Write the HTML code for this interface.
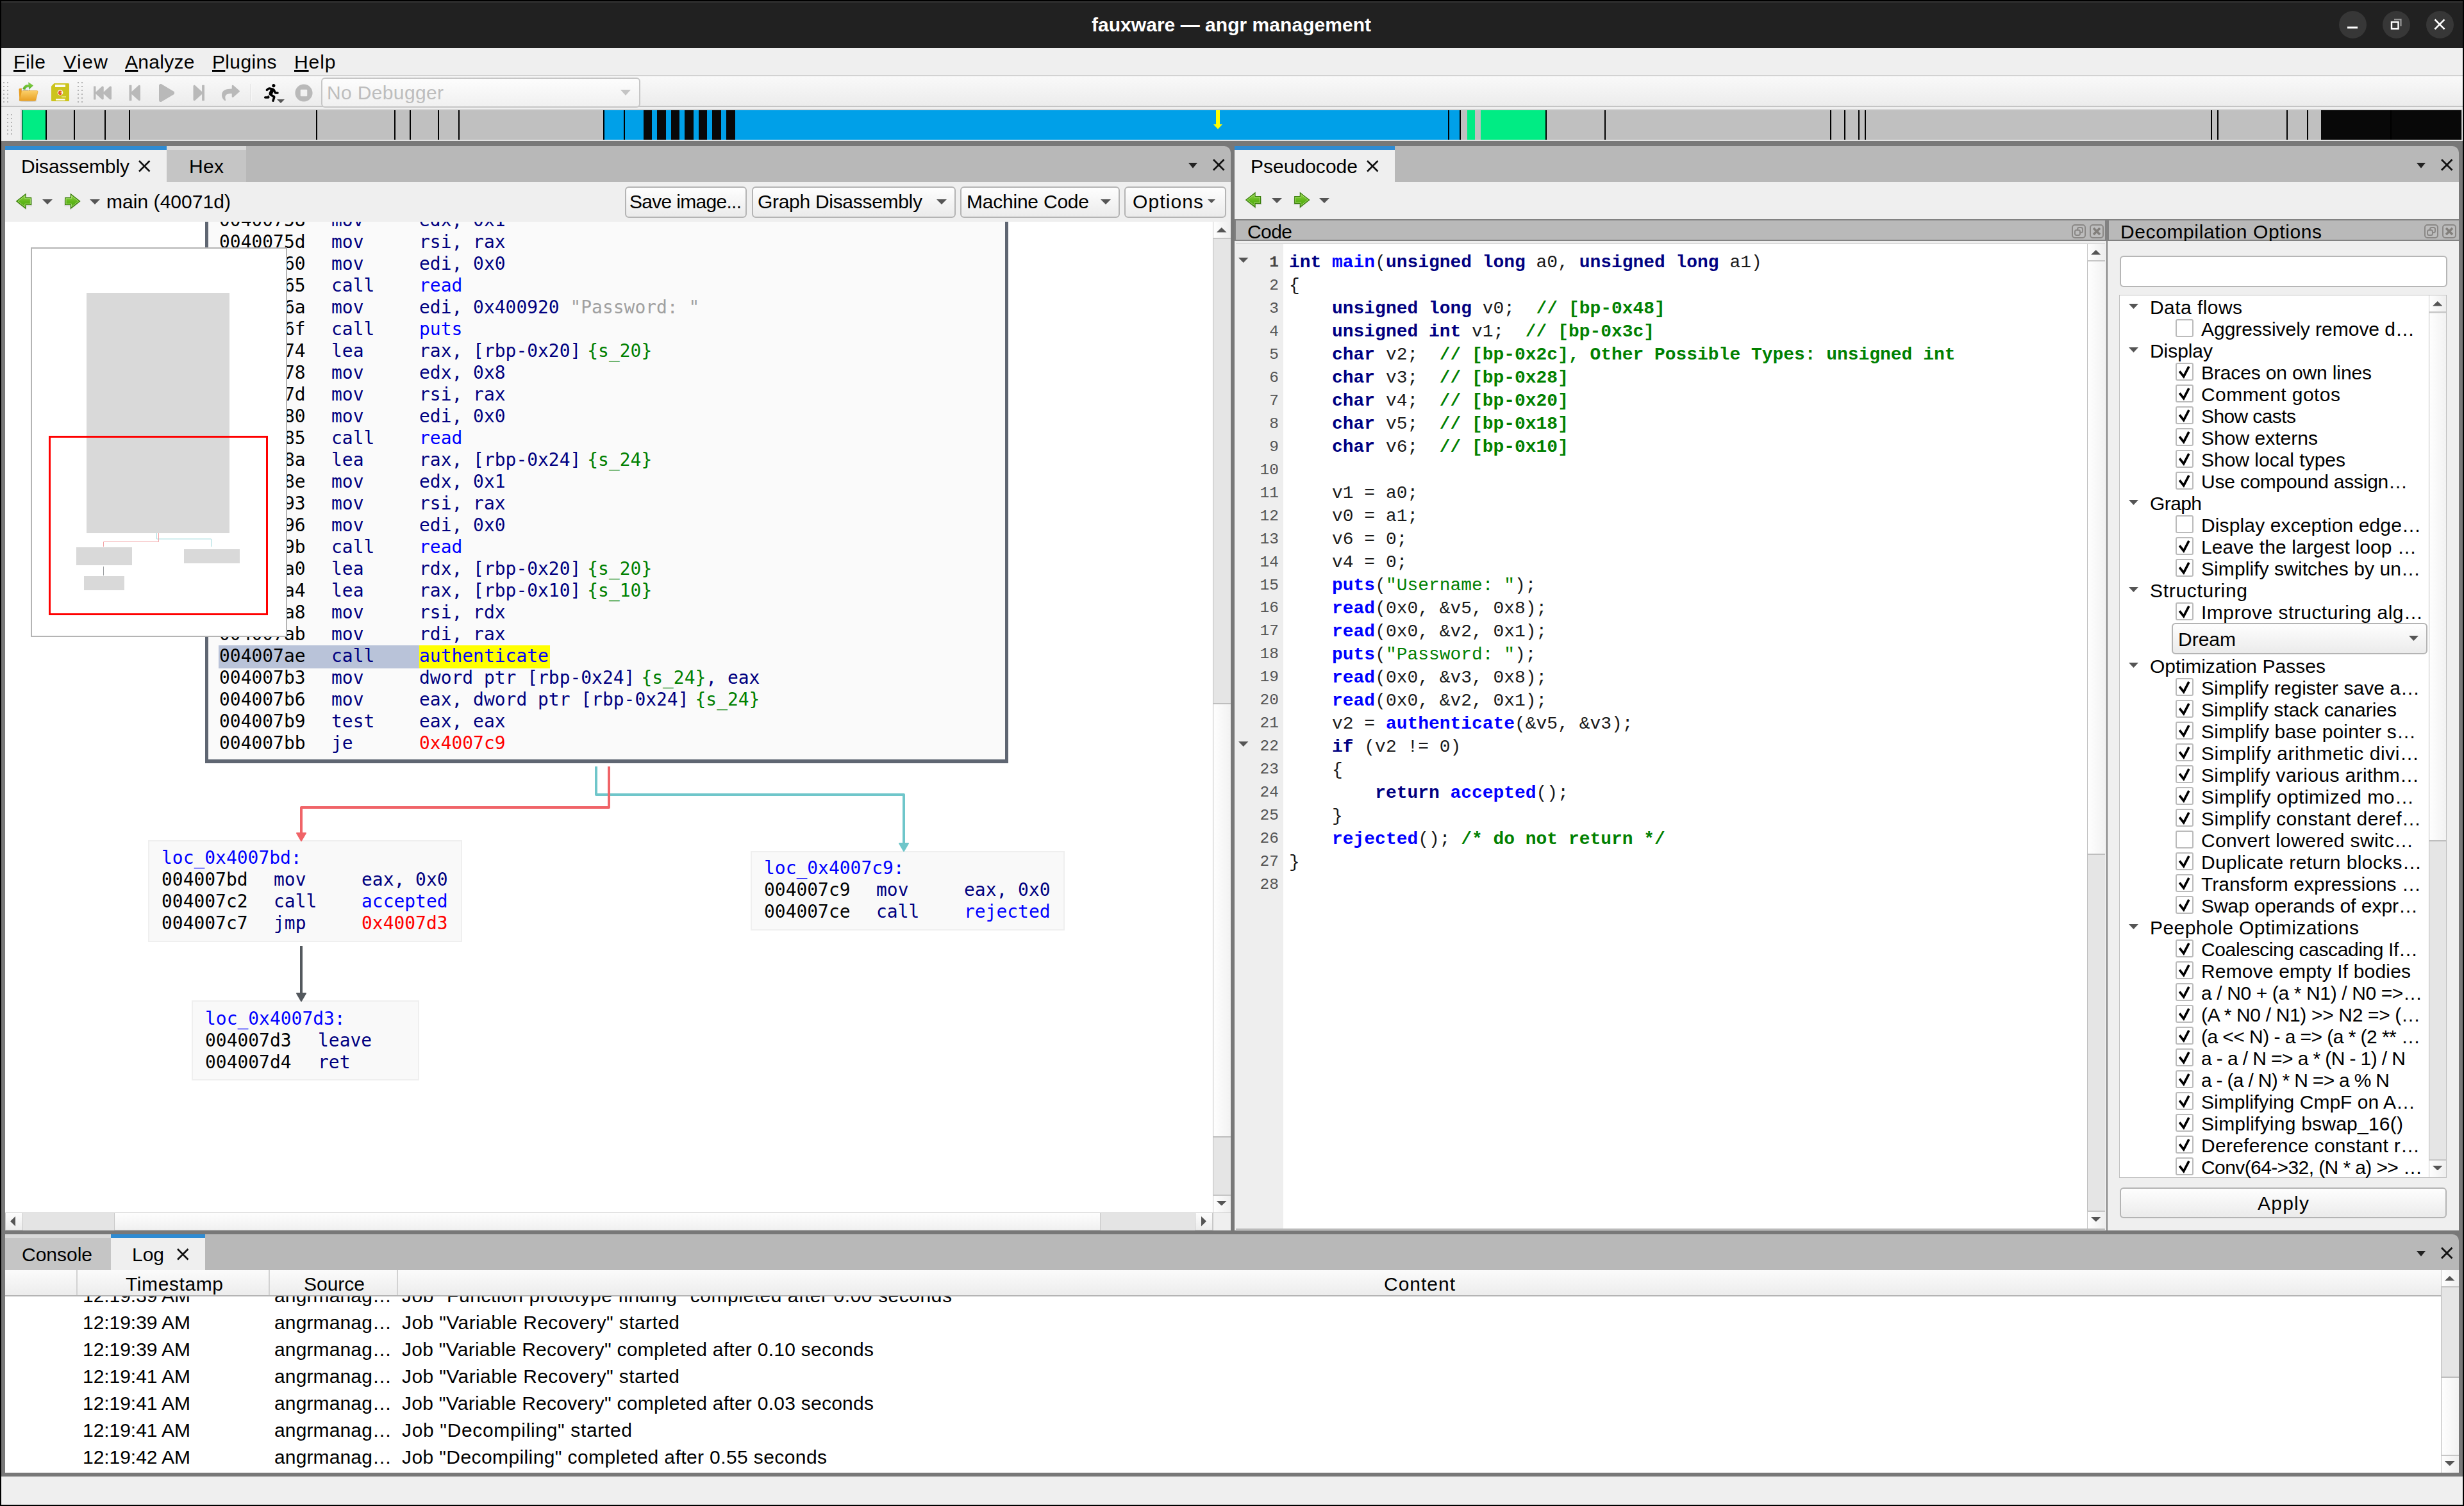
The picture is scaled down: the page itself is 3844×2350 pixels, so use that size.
<!DOCTYPE html>
<html><head><meta charset="utf-8"><title>fauxware — angr management</title>
<style>
html,body{margin:0;padding:0}
body{width:3844px;height:2350px;overflow:hidden;background:#000;position:relative}
#w div,#w svg{position:absolute;box-sizing:border-box}
#w{position:absolute;left:0;top:0;width:3844px;height:2350px;overflow:hidden}
.u,.ub,.m,.c,.cb{white-space:pre;line-height:1;color:#000}
.u{font-family:"Liberation Sans",sans-serif;font-size:30px}
.ub{font-family:"Liberation Sans",sans-serif;font-size:30px;font-weight:bold}
.m{font-family:"DejaVu Sans Mono","Liberation Mono",monospace;font-size:27.95px}
.c{font-family:"Liberation Mono",monospace;font-size:27.95px}
.cb{font-family:"Liberation Mono",monospace;font-size:27.95px;font-weight:bold}
b{font-weight:bold}
.btn{border:2px solid #b4b4b4;border-radius:6px;background:linear-gradient(#fefefe,#ebebeb)}
.k{color:#000080;font-weight:bold}.f{color:#0000ff;font-weight:bold}.g{color:#008000;font-weight:bold}.s{color:#008000}
.n{color:#000080}.fn{color:#0000ff}.v{color:#008000}.j{color:#ff0000}.st{color:#a0a0a0}
</style></head>
<body><div id="w">
<div style="left:2px;top:2px;width:3840px;height:73px;background:#212121;"></div>
<div style="left:2px;top:2px;width:3840px;height:2px;background:#343434;"></div>
<div class="ub" style="left:1703px;top:23.60px;font-size:30px;letter-spacing:0.034px;color:#fff;">fauxware — angr management</div>
<div style="left:3648.5px;top:16.5px;width:43px;height:43px;background:#373737;border-radius:50%;"></div>
<div style="left:3716.5px;top:16.5px;width:43px;height:43px;background:#373737;border-radius:50%;"></div>
<div style="left:3784.5px;top:16.5px;width:43px;height:43px;background:#373737;border-radius:50%;"></div>
<svg style="left:3658px;top:26px" width="24" height="24" viewBox="0 0 24 24"><rect x="4" y="15.5" width="16" height="3" fill="#fff"/></svg>
<svg style="left:3726px;top:26px" width="24" height="24" viewBox="0 0 24 24"><path d="M9 4.5H19.5V15" fill="none" stroke="#9a9a9a" stroke-width="2.2"/><rect x="5" y="8.5" width="10.5" height="10.5" fill="none" stroke="#fff" stroke-width="2.4"/></svg>
<svg style="left:3794px;top:26px" width="24" height="24" viewBox="0 0 24 24"><path d="M4.5 4.5L19.5 19.5M19.5 4.5L4.5 19.5" stroke="#fff" stroke-width="2.6" fill="none"/></svg>
<div style="left:2px;top:75px;width:3840px;height:42px;background:#efefef;"></div>
<div class="u" style="left:21px;top:81.60px;letter-spacing:0.552px;"><u>F</u>ile</div>
<div class="u" style="left:99px;top:81.60px;letter-spacing:1.505px;"><u>V</u>iew</div>
<div class="u" style="left:195px;top:81.60px;letter-spacing:0.294px;"><u>A</u>nalyze</div>
<div class="u" style="left:331px;top:81.60px;letter-spacing:0.349px;"><u>P</u>lugins</div>
<div class="u" style="left:459px;top:81.60px;letter-spacing:0.927px;"><u>H</u>elp</div>
<div style="left:2px;top:117px;width:3840px;height:2px;background:#d2d2d2;"></div>
<div style="left:2px;top:119px;width:3840px;height:46px;background:linear-gradient(#f9f9f9,#ececec);"></div>
<div style="left:2px;top:165px;width:3840px;height:2px;background:#c4c4c4;"></div>
<div style="left:2px;top:167px;width:3840px;height:53px;background:#efefef;"></div>
<svg style="left:4.5px;top:127.5px" width="8" height="32" viewBox="0 0 8 32"><rect x="0" y="0" width="2" height="2" fill="#b4b4b4"/><rect x="6" y="0" width="2" height="2" fill="#b4b4b4"/><rect x="0" y="6" width="2" height="2" fill="#b4b4b4"/><rect x="6" y="6" width="2" height="2" fill="#b4b4b4"/><rect x="0" y="12" width="2" height="2" fill="#b4b4b4"/><rect x="6" y="12" width="2" height="2" fill="#b4b4b4"/><rect x="0" y="18" width="2" height="2" fill="#b4b4b4"/><rect x="6" y="18" width="2" height="2" fill="#b4b4b4"/><rect x="0" y="24" width="2" height="2" fill="#b4b4b4"/><rect x="6" y="24" width="2" height="2" fill="#b4b4b4"/><rect x="0" y="30" width="2" height="2" fill="#b4b4b4"/><rect x="6" y="30" width="2" height="2" fill="#b4b4b4"/></svg>
<svg style="left:120.5px;top:127.5px" width="8" height="32" viewBox="0 0 8 32"><rect x="0" y="0" width="2" height="2" fill="#b4b4b4"/><rect x="6" y="0" width="2" height="2" fill="#b4b4b4"/><rect x="0" y="6" width="2" height="2" fill="#b4b4b4"/><rect x="6" y="6" width="2" height="2" fill="#b4b4b4"/><rect x="0" y="12" width="2" height="2" fill="#b4b4b4"/><rect x="6" y="12" width="2" height="2" fill="#b4b4b4"/><rect x="0" y="18" width="2" height="2" fill="#b4b4b4"/><rect x="6" y="18" width="2" height="2" fill="#b4b4b4"/><rect x="0" y="24" width="2" height="2" fill="#b4b4b4"/><rect x="6" y="24" width="2" height="2" fill="#b4b4b4"/><rect x="0" y="30" width="2" height="2" fill="#b4b4b4"/><rect x="6" y="30" width="2" height="2" fill="#b4b4b4"/></svg>
<svg style="left:10.5px;top:178px" width="8" height="32" viewBox="0 0 8 32"><rect x="0" y="0" width="2" height="2" fill="#b4b4b4"/><rect x="6" y="0" width="2" height="2" fill="#b4b4b4"/><rect x="0" y="6" width="2" height="2" fill="#b4b4b4"/><rect x="6" y="6" width="2" height="2" fill="#b4b4b4"/><rect x="0" y="12" width="2" height="2" fill="#b4b4b4"/><rect x="6" y="12" width="2" height="2" fill="#b4b4b4"/><rect x="0" y="18" width="2" height="2" fill="#b4b4b4"/><rect x="6" y="18" width="2" height="2" fill="#b4b4b4"/><rect x="0" y="24" width="2" height="2" fill="#b4b4b4"/><rect x="6" y="24" width="2" height="2" fill="#b4b4b4"/><rect x="0" y="30" width="2" height="2" fill="#b4b4b4"/><rect x="6" y="30" width="2" height="2" fill="#b4b4b4"/></svg>
<svg style="left:146.00px;top:130.5px" width="28.00" height="28" viewBox="0 0 512 512"><path d="M0 436V76c0-6.6 5.4-12 12-12h40c6.6 0 12 5.4 12 12v151.9L235.5 71.4C256.1 54.3 288 68.6 288 96v131.9L459.5 71.4C480.1 54.3 512 68.6 512 96v320c0 27.4-31.9 41.7-52.5 24.6L288 285.3V416c0 27.4-31.9 41.7-52.5 24.6L64 285.3V436c0 6.6-5.4 12-12 12H12c-6.6 0-12-5.4-12-12z" fill="#b9b9b9"/></svg>
<svg style="left:197.75px;top:130.5px" width="24.50" height="28" viewBox="0 0 448 512"><path d="M64 468V44c0-6.6 5.4-12 12-12h48c6.6 0 12 5.4 12 12v176.4l195.5-181C352.1 22.3 384 36.6 384 64v384c0 27.4-31.9 41.7-52.5 24.6L136 292.7V468c0 6.6-5.4 12-12 12H76c-6.6 0-12-5.4-12-12z" fill="#b9b9b9"/></svg>
<svg style="left:247.75px;top:130.5px" width="24.50" height="28" viewBox="0 0 448 512"><path d="M424.4 214.7L72.4 6.6C43.8-10.3 0 6.1 0 47.9V464c0 37.5 40.7 60.1 72.4 41.3l352-208c31.4-18.5 31.5-64.1 0-82.600z" fill="#b9b9b9"/></svg>
<svg style="left:297.75px;top:130.5px" width="24.50" height="28" viewBox="0 0 448 512"><path d="M384 44v424c0 6.6-5.4 12-12 12h-48c-6.6 0-12-5.4-12-12V291.6l-195.5 181C95.9 489.7 64 475.4 64 448V64c0-27.4 31.9-41.7 52.5-24.6L312 219.3V44c0-6.6 5.4-12 12-12h48c6.600 0 12 5.4 12 12z" fill="#b9b9b9"/></svg>
<svg style="left:346.00px;top:130.5px" width="28.00" height="28" viewBox="0 0 512 512"><path d="M503.691 189.836L327.687 37.851C312.281 24.546 288 35.347 288 56.015v80.053C127.371 137.907 0 170.1 0 322.326c0 61.441 39.581 122.309 83.333 154.132 13.653 9.931 33.111-2.533 28.077-18.631C66.066 312.814 132.917 274.316 288 272.085V360c0 20.7 24.3 31.453 39.687 18.164l176.004-152c11.071-9.562 11.086-26.753 0-36.328z" fill="#b9b9b9"/></svg>
<svg style="left:460.00px;top:130.5px" width="28.00" height="28" viewBox="0 0 512 512"><path d="M256 8C119 8 8 119 8 256s111 248 248 248 248-111 248-248S393 8 256 8zm96 328c0 8.8-7.2 16-16 16H176c-8.8 0-16-7.2-16-16V176c0-8.800 7.2-16 16-16h160c8.8 0 16 7.2 16 16v160z" fill="#b9b9b9"/></svg>
<div style="left:391px;top:131px;width:1px;height:27px;background:#cfcfcf;"></div>
<div style="left:392px;top:131px;width:1px;height:27px;background:#fdfdfd;"></div>
<svg style="left:412.4px;top:130.5px" width="22.75" height="28" viewBox="0 0 416 512"><path d="M272 96c26.51 0 48-21.49 48-48S298.51 0 272 0s-48 21.49-48 48 21.49 48 48 48zM113.69 317.47l-14.8 34.52H32c-17.67 0-32 14.33-32 32s14.33 32 32 32h77.45c19.25 0 36.58-11.44 44.11-29.090l8.790-20.520-10.670-6.300c-17.320-10.230-30.060-25.370-37.990-42.610zM384 223.990h-44.030l-26.060-53.250c-12.500-25.550-35.450-44.230-61.780-50.940l-71.080-21.140c-28.300-6.800-57.770-.55-80.840 17.140l-39.670 30.410c-14.030 10.750-16.690 30.830-5.920 44.860s30.840 16.660 44.860 5.920l39.690-30.410c7.670-5.890 17.440-8 25.270-6.140l14.700 4.370-37.460 87.390c-12.620 29.480-1.310 64.010 26.300 80.310l84.980 50.170-27.470 87.730c-5.280 16.860 4.110 34.810 20.970 40.090 3.190 1 6.410 1.480 9.580 1.480 13.610 0 26.230-8.770 30.520-22.450l31.640-101.060c5.910-20.770-2.890-43.080-21.640-54.390l-61.240-36.140 31.310-78.280 20.270 41.430c8 16.340 24.920 26.890 43.110 26.890H384c17.670 0 32-14.330 32-32s-14.330-32-32-32z" fill="#000"/></svg>
<svg style="left:432px;top:155px" width="12" height="6" viewBox="0 0 12 6"><path d="M0 0H12L6 6Z" fill="#555"/></svg>
<svg style="left:27px;top:126px" width="34" height="34" viewBox="0 0 34 34"><defs><linearGradient id="fg" x1="0" y1="0" x2="0" y2="1"><stop offset="0" stop-color="#fbd06a"/><stop offset="1" stop-color="#e9a023"/></linearGradient><linearGradient id="ga" x1="0" y1="0" x2="0" y2="1"><stop offset="0" stop-color="#8fdc4a"/><stop offset="1" stop-color="#55b020"/></linearGradient></defs><ellipse cx="17" cy="31.500" rx="14" ry="1.600" fill="#000" opacity="0.120"/><path d="M2.500 13.500Q2.500 12 4 12H9L11 14H20V31H3.500Z" fill="#e89c1c"/><path d="M7 12.500L16 10L19 11.500V18H7Z" fill="#eef3f8" stroke="#b8c6d4" stroke-width="0.600"/><path d="M9 14.500H17M9 16.500H15" stroke="#8aa4c0" stroke-width="0.800"/><path d="M6.500 17Q7 15.500 8.500 15.500H30.500Q32.500 15.500 32 17.500L29 30Q28.700 31.300 27 31.300H4.500Q3 31.300 3.400 29.800Z" fill="url(#fg)" stroke="#e0961a" stroke-width="0.500"/><path d="M9 13C9.500 8 14 5.500 18 6.800L17.600 2.800L24.500 7.600L18.600 13L18.400 9.800C15.500 9 13 10.500 12.300 13.500Z" fill="url(#ga)" stroke="#4c9c1c" stroke-width="0.500" stroke-linejoin="round"/></svg>
<svg style="left:80px;top:130px" width="28" height="28" viewBox="0 0 28 28"><path d="M0 4.500L4.500 0H26.500Q28 0 28 1.500V26.500Q28 28 26.500 28H1.500Q0 28 0 26.500Z" fill="#ccc41c"/><rect x="6" y="2" width="16" height="4" fill="#fbfbf0"/><circle cx="14" cy="14.500" r="4.300" fill="#fdf6ee"/><path d="M11 14.500A3 3 0 0 1 16.500 12.800L14 14.500L16.800 16A3 3 0 0 1 11 14.500Z" fill="#e8502a"/><circle cx="15" cy="14.200" r="1" fill="#f0a020"/><rect x="16" y="20.500" width="7" height="1.200" fill="#f4f0b8"/><rect x="7" y="24" width="14.500" height="2.600" fill="#fbfbf0"/></svg>
<div class="btn" style="left:501px;top:121px;width:498px;height:47px;border-color:#c6c6c6;background:linear-gradient(#fdfdfd,#f0f0f0)"></div>
<div class="u" style="left:510px;top:129.60px;letter-spacing:0.355px;color:#bdbdbd;">No Debugger</div>
<svg style="left:967px;top:139px" width="18" height="12" viewBox="0 0 18 12"><path d="M1 1H17L9 10Z" fill="#c4c4c4"/></svg>
<div style="left:32px;top:170px;width:3809px;height:49px;background:#c0c0c0;border:2px solid #d6d6d6;border-right:none;border-bottom:none"></div>
<div style="left:34px;top:172px;width:1px;height:46px;background:#000;"></div>
<div style="left:32px;top:218px;width:3809px;height:2px;background:#e2e2e2;"></div>
<div style="left:35px;top:172px;width:36px;height:46px;background:#00ec84;"></div>
<div style="left:941px;top:172px;width:1338px;height:46px;background:#00a0e8;"></div>
<div style="left:2289px;top:172px;width:12px;height:46px;background:#00ec84;"></div>
<div style="left:2310px;top:172px;width:102px;height:46px;background:#00ec84;"></div>
<div style="left:3621px;top:172px;width:219px;height:46px;background:#080808;"></div>
<div style="left:71px;top:172px;width:2px;height:46px;background:#000;"></div>
<div style="left:115px;top:172px;width:2px;height:46px;background:#000;"></div>
<div style="left:163px;top:172px;width:2px;height:46px;background:#000;"></div>
<div style="left:201px;top:172px;width:2px;height:46px;background:#000;"></div>
<div style="left:493px;top:172px;width:2px;height:46px;background:#000;"></div>
<div style="left:615px;top:172px;width:2px;height:46px;background:#000;"></div>
<div style="left:639px;top:172px;width:2px;height:46px;background:#000;"></div>
<div style="left:683px;top:172px;width:2px;height:46px;background:#000;"></div>
<div style="left:715px;top:172px;width:2px;height:46px;background:#000;"></div>
<div style="left:941px;top:172px;width:2px;height:46px;background:#000;"></div>
<div style="left:973px;top:172px;width:2px;height:46px;background:#000;"></div>
<div style="left:2259px;top:172px;width:2px;height:46px;background:#000;"></div>
<div style="left:2277px;top:172px;width:2px;height:46px;background:#000;"></div>
<div style="left:2411px;top:172px;width:2px;height:46px;background:#000;"></div>
<div style="left:2503px;top:172px;width:2px;height:46px;background:#000;"></div>
<div style="left:2855px;top:172px;width:2px;height:46px;background:#000;"></div>
<div style="left:2877px;top:172px;width:2px;height:46px;background:#000;"></div>
<div style="left:2899px;top:172px;width:2px;height:46px;background:#000;"></div>
<div style="left:2909px;top:172px;width:2px;height:46px;background:#000;"></div>
<div style="left:3449px;top:172px;width:2px;height:46px;background:#000;"></div>
<div style="left:3459px;top:172px;width:2px;height:46px;background:#000;"></div>
<div style="left:3567px;top:172px;width:2px;height:46px;background:#000;"></div>
<div style="left:3599px;top:172px;width:2px;height:46px;background:#000;"></div>
<div style="left:1004px;top:172px;width:13px;height:46px;background:#080808;"></div>
<div style="left:1025px;top:172px;width:14px;height:46px;background:#080808;"></div>
<div style="left:1047px;top:172px;width:13px;height:46px;background:#080808;"></div>
<div style="left:1068px;top:172px;width:14px;height:46px;background:#080808;"></div>
<div style="left:1090px;top:172px;width:13px;height:46px;background:#080808;"></div>
<div style="left:1111px;top:172px;width:14px;height:46px;background:#080808;"></div>
<div style="left:1133px;top:172px;width:14px;height:46px;background:#080808;"></div>
<div style="left:3729px;top:172px;width:1.5px;height:46px;background:#000;"></div>
<svg style="left:1890px;top:172px" width="20" height="30" viewBox="0 0 20 30"><path d="M7 0H13V22H17L10 29.500L3 22H7Z" fill="#ffff00"/></svg>
<div style="left:2px;top:220px;width:3840px;height:2084px;background:#787878;"></div>
<div style="left:2px;top:2304px;width:3840px;height:44px;background:#efefef;"></div>
<div style="left:8px;top:228px;width:1912px;height:56px;background:#b8b8b8;border-top-right-radius:10px"></div>
<div style="left:8px;top:228px;width:252px;height:56px;background:#efefef;"></div>
<div style="left:8px;top:228px;width:252px;height:6px;background:#2f8bd2;"></div>
<div style="left:260px;top:228px;width:124px;height:56px;background:#c5c5c5;"></div>
<div style="left:260px;top:228px;width:124px;height:6px;background:#d9d9d9;"></div>
<div class="u" style="left:33px;top:244.60px;letter-spacing:-0.105px;">Disassembly</div>
<svg style="left:214.75px;top:248.75px" width="20.5" height="20.5" viewBox="0 0 20.5 20.5"><path d="M2 2L18.5 18.5M18.5 2L2 18.5" stroke="#111" stroke-width="2.7" fill="none"/></svg>
<div class="u" style="left:295px;top:244.60px;letter-spacing:0.320px;">Hex</div>
<svg style="left:1854.0px;top:254.05px" width="14" height="8.5" viewBox="0 0 14 8.5"><path d="M0 0H14L7.0 8.5Z" fill="#222"/></svg>
<svg style="left:1890.75px;top:246.75px" width="20.5" height="20.5" viewBox="0 0 20.5 20.5"><path d="M2 2L18.5 18.5M18.5 2L2 18.5" stroke="#111" stroke-width="2.7" fill="none"/></svg>
<div style="left:8px;top:284px;width:1912px;height:62px;background:#efefef;"></div>
<svg style="left:23.5px;top:300px" width="27" height="30" viewBox="0 0 27 30"><defs><linearGradient id="na1" x1="0" y1="0" x2="0" y2="1"><stop offset="0" stop-color="#94d548"/><stop offset="0.5" stop-color="#62b81c"/><stop offset="1" stop-color="#4aa40e"/></linearGradient></defs><path d="M2.500 15L16 4V9.500H25V20H16V26Z" fill="#000" opacity="0.100" transform="translate(1,2)"/><path d="M1.800 14L16 2.900V8.600H24.600V19.400H16V25.100Z" fill="url(#na1)" stroke="#3b7f0c" stroke-width="1.300" stroke-linejoin="miter"/><path d="M4 14L14.800 5.500V9.800H23.400V18.200H14.800V22.500Z" fill="none" stroke="#b9e68a" stroke-width="1" opacity="0.750"/></svg>
<svg style="left:66.0px;top:311.0px" width="16" height="8" viewBox="0 0 16 8"><path d="M0 0H16L8.0 8Z" fill="#555"/></svg>
<svg style="left:99.5px;top:300px" width="27" height="30" viewBox="0 0 27 30"><g transform="translate(26.4,0) scale(-1,1)"><defs><linearGradient id="na2" x1="0" y1="0" x2="0" y2="1"><stop offset="0" stop-color="#94d548"/><stop offset="0.5" stop-color="#62b81c"/><stop offset="1" stop-color="#4aa40e"/></linearGradient></defs><path d="M2.500 15L16 4V9.500H25V20H16V26Z" fill="#000" opacity="0.100" transform="translate(1,2)"/><path d="M1.800 14L16 2.900V8.600H24.600V19.400H16V25.100Z" fill="url(#na2)" stroke="#3b7f0c" stroke-width="1.300" stroke-linejoin="miter"/><path d="M4 14L14.800 5.500V9.800H23.400V18.200H14.800V22.500Z" fill="none" stroke="#b9e68a" stroke-width="1" opacity="0.750"/></g></svg>
<svg style="left:140.0px;top:311.0px" width="16" height="8" viewBox="0 0 16 8"><path d="M0 0H16L8.0 8Z" fill="#555"/></svg>
<div class="u" style="left:166px;top:300.10px;letter-spacing:0.046px;">main (40071d)</div>
<div class="btn" style="left:974.5px;top:290.5px;width:190.5px;height:49.0px"></div>
<div class="u" style="left:982px;top:300.10px;letter-spacing:-0.703px;">Save image...</div>
<div class="btn" style="left:1172.5px;top:290.5px;width:318.5px;height:49.0px"></div>
<div class="u" style="left:1182px;top:300.10px;letter-spacing:-0.298px;">Graph Disassembly</div>
<svg style="left:1461.0px;top:311.0px" width="16" height="8" viewBox="0 0 16 8"><path d="M0 0H16L8.0 8Z" fill="#555"/></svg>
<div class="btn" style="left:1498px;top:290.5px;width:249px;height:49.0px"></div>
<div class="u" style="left:1508px;top:300.10px;letter-spacing:-0.223px;">Machine Code</div>
<svg style="left:1716.5px;top:311.0px" width="16" height="8" viewBox="0 0 16 8"><path d="M0 0H16L8.0 8Z" fill="#555"/></svg>
<div class="btn" style="left:1754px;top:290.5px;width:159px;height:49.0px"></div>
<div class="u" style="left:1767px;top:300.10px;letter-spacing:1.102px;">Options</div>
<svg style="left:1884.0px;top:311.0px" width="12" height="6" viewBox="0 0 12 6"><path d="M0 0H12L6.0 6Z" fill="#555"/></svg>
<div id="gv" style="left:8px;top:346px;width:1884px;height:1546px;background:#fff;overflow:hidden">
<div style="left:312px;top:-46px;width:1253px;height:891px;background:#fafafa;border:5px solid #5f6672;border-bottom-width:6px"></div>
<div style="left:333px;top:661px;width:313px;height:36px;background:#b9c3d9;"></div>
<div style="left:646px;top:661px;width:204px;height:36px;background:#ffff00;"></div>
<div class="m" style="left:334px;top:-15.55px;">00400758</div>
<div class="m" style="left:509px;top:-15.55px;color:#000080;">mov</div>
<div class="m" style="left:646px;top:-15.55px;color:#000080;">edx, 0x1</div>
<div class="m" style="left:334px;top:18.45px;">0040075d</div>
<div class="m" style="left:509px;top:18.45px;color:#000080;">mov</div>
<div class="m" style="left:646px;top:18.45px;color:#000080;">rsi, rax</div>
<div class="m" style="left:334px;top:52.45px;">00400760</div>
<div class="m" style="left:509px;top:52.45px;color:#000080;">mov</div>
<div class="m" style="left:646px;top:52.45px;color:#000080;">edi, 0x0</div>
<div class="m" style="left:334px;top:86.45px;">00400765</div>
<div class="m" style="left:509px;top:86.45px;color:#000080;">call</div>
<div class="m" style="left:646px;top:86.45px;color:#000080;"><span class="fn">read</span></div>
<div class="m" style="left:334px;top:120.45px;">0040076a</div>
<div class="m" style="left:509px;top:120.45px;color:#000080;">mov</div>
<div class="m" style="left:646px;top:120.45px;color:#000080;">edi, 0x400920 <span class="st">"Password: "</span></div>
<div class="m" style="left:334px;top:154.45px;">0040076f</div>
<div class="m" style="left:509px;top:154.45px;color:#000080;">call</div>
<div class="m" style="left:646px;top:154.45px;color:#000080;"><span class="fn">puts</span></div>
<div class="m" style="left:334px;top:188.45px;">00400774</div>
<div class="m" style="left:509px;top:188.45px;color:#000080;">lea</div>
<div class="m" style="left:646px;top:188.45px;color:#000080;">rax, [rbp-0x20] <span class="v" style="margin-left:-6.830px">{s_20}</span></div>
<div class="m" style="left:334px;top:222.45px;">00400778</div>
<div class="m" style="left:509px;top:222.45px;color:#000080;">mov</div>
<div class="m" style="left:646px;top:222.45px;color:#000080;">edx, 0x8</div>
<div class="m" style="left:334px;top:256.45px;">0040077d</div>
<div class="m" style="left:509px;top:256.45px;color:#000080;">mov</div>
<div class="m" style="left:646px;top:256.45px;color:#000080;">rsi, rax</div>
<div class="m" style="left:334px;top:290.45px;">00400780</div>
<div class="m" style="left:509px;top:290.45px;color:#000080;">mov</div>
<div class="m" style="left:646px;top:290.45px;color:#000080;">edi, 0x0</div>
<div class="m" style="left:334px;top:324.45px;">00400785</div>
<div class="m" style="left:509px;top:324.45px;color:#000080;">call</div>
<div class="m" style="left:646px;top:324.45px;color:#000080;"><span class="fn">read</span></div>
<div class="m" style="left:334px;top:358.45px;">0040078a</div>
<div class="m" style="left:509px;top:358.45px;color:#000080;">lea</div>
<div class="m" style="left:646px;top:358.45px;color:#000080;">rax, [rbp-0x24] <span class="v" style="margin-left:-6.830px">{s_24}</span></div>
<div class="m" style="left:334px;top:392.45px;">0040078e</div>
<div class="m" style="left:509px;top:392.45px;color:#000080;">mov</div>
<div class="m" style="left:646px;top:392.45px;color:#000080;">edx, 0x1</div>
<div class="m" style="left:334px;top:426.45px;">00400793</div>
<div class="m" style="left:509px;top:426.45px;color:#000080;">mov</div>
<div class="m" style="left:646px;top:426.45px;color:#000080;">rsi, rax</div>
<div class="m" style="left:334px;top:460.45px;">00400796</div>
<div class="m" style="left:509px;top:460.45px;color:#000080;">mov</div>
<div class="m" style="left:646px;top:460.45px;color:#000080;">edi, 0x0</div>
<div class="m" style="left:334px;top:494.45px;">0040079b</div>
<div class="m" style="left:509px;top:494.45px;color:#000080;">call</div>
<div class="m" style="left:646px;top:494.45px;color:#000080;"><span class="fn">read</span></div>
<div class="m" style="left:334px;top:528.45px;">004007a0</div>
<div class="m" style="left:509px;top:528.45px;color:#000080;">lea</div>
<div class="m" style="left:646px;top:528.45px;color:#000080;">rdx, [rbp-0x20] <span class="v" style="margin-left:-6.830px">{s_20}</span></div>
<div class="m" style="left:334px;top:562.45px;">004007a4</div>
<div class="m" style="left:509px;top:562.45px;color:#000080;">lea</div>
<div class="m" style="left:646px;top:562.45px;color:#000080;">rax, [rbp-0x10] <span class="v" style="margin-left:-6.830px">{s_10}</span></div>
<div class="m" style="left:334px;top:596.45px;">004007a8</div>
<div class="m" style="left:509px;top:596.45px;color:#000080;">mov</div>
<div class="m" style="left:646px;top:596.45px;color:#000080;">rsi, rdx</div>
<div class="m" style="left:334px;top:630.45px;">004007ab</div>
<div class="m" style="left:509px;top:630.45px;color:#000080;">mov</div>
<div class="m" style="left:646px;top:630.45px;color:#000080;">rdi, rax</div>
<div class="m" style="left:334px;top:664.45px;">004007ae</div>
<div class="m" style="left:509px;top:664.45px;color:#000080;">call</div>
<div class="m" style="left:646px;top:664.45px;color:#000080;"><span class="fn">authenticate</span></div>
<div class="m" style="left:334px;top:698.45px;">004007b3</div>
<div class="m" style="left:509px;top:698.45px;color:#000080;">mov</div>
<div class="m" style="left:646px;top:698.45px;color:#000080;">dword ptr [rbp-0x24] <span class="v" style="margin-left:-6.830px">{s_24}</span>, eax</div>
<div class="m" style="left:334px;top:732.45px;">004007b6</div>
<div class="m" style="left:509px;top:732.45px;color:#000080;">mov</div>
<div class="m" style="left:646px;top:732.45px;color:#000080;">eax, dword ptr [rbp-0x24] <span class="v" style="margin-left:-6.830px">{s_24}</span></div>
<div class="m" style="left:334px;top:766.45px;">004007b9</div>
<div class="m" style="left:509px;top:766.45px;color:#000080;">test</div>
<div class="m" style="left:646px;top:766.45px;color:#000080;">eax, eax</div>
<div class="m" style="left:334px;top:799.95px;">004007bb</div>
<div class="m" style="left:509px;top:799.95px;color:#000080;">je</div>
<div class="m" style="left:646px;top:799.95px;color:#000080;"><span class="j">0x4007c9</span></div>
<div style="left:223px;top:965px;width:490px;height:159px;background:#f9f9f9;border:2px solid #efefef"></div>
<div class="m" style="left:244px;top:978.65px;color:#0000ff;">loc_0x4007bd:</div>
<div class="m" style="left:244px;top:1012.65px;">004007bd</div>
<div class="m" style="left:419px;top:1012.65px;color:#000080;">mov</div>
<div class="m" style="left:556px;top:1012.65px;color:#000080;">eax, 0x0</div>
<div class="m" style="left:244px;top:1046.65px;">004007c2</div>
<div class="m" style="left:419px;top:1046.65px;color:#000080;">call</div>
<div class="m" style="left:556px;top:1046.65px;color:#000080;"><span class="fn">accepted</span></div>
<div class="m" style="left:244px;top:1080.65px;">004007c7</div>
<div class="m" style="left:419px;top:1080.65px;color:#000080;">jmp</div>
<div class="m" style="left:556px;top:1080.65px;color:#000080;"><span class="j">0x4007d3</span></div>
<div style="left:291px;top:1215px;width:355px;height:125px;background:#f9f9f9;border:2px solid #efefef"></div>
<div class="m" style="left:312px;top:1229.65px;color:#0000ff;">loc_0x4007d3:</div>
<div class="m" style="left:312px;top:1263.65px;">004007d3</div>
<div class="m" style="left:488px;top:1263.65px;color:#000080;">leave</div>
<div class="m" style="left:312px;top:1297.65px;">004007d4</div>
<div class="m" style="left:488px;top:1297.65px;color:#000080;">ret</div>
<div style="left:1163px;top:982px;width:490px;height:124px;background:#f9f9f9;border:2px solid #efefef"></div>
<div class="m" style="left:1184px;top:995.15px;color:#0000ff;">loc_0x4007c9:</div>
<div class="m" style="left:1184px;top:1029.15px;">004007c9</div>
<div class="m" style="left:1359px;top:1029.15px;color:#000080;">mov</div>
<div class="m" style="left:1496px;top:1029.15px;color:#000080;">eax, 0x0</div>
<div class="m" style="left:1184px;top:1063.15px;">004007ce</div>
<div class="m" style="left:1359px;top:1063.15px;color:#000080;">call</div>
<div class="m" style="left:1496px;top:1063.15px;color:#000080;"><span class="fn">rejected</span></div>
<svg style="left:0;top:0" width="1884" height="1546" viewBox="8 346 1884 1546"><path d="M930 1196V1240H1410V1316" fill="none" stroke="#6fc6ca" stroke-width="4" stroke-linejoin="round"/><path d="M1403 1316H1417L1410 1328Z" fill="#6fc6ca" stroke="#6fc6ca" stroke-width="2" stroke-linejoin="round"/><path d="M950 1196V1260H470V1300" fill="none" stroke="#f06468" stroke-width="4" stroke-linejoin="round"/><path d="M463 1300H477L470 1312Z" fill="#f06468" stroke="#f06468" stroke-width="2" stroke-linejoin="round"/><path d="M470 1476V1550" fill="none" stroke="#54595e" stroke-width="4"/><path d="M463 1550H477L470 1562Z" fill="#54595e" stroke="#54595e" stroke-width="2" stroke-linejoin="round"/></svg>
<div style="left:40px;top:40px;width:400px;height:608px;background:#fff;border:2px solid #b4b4b4"></div>
<div style="left:127px;top:111px;width:223px;height:375px;background:#d9d9d9;"></div>
<div style="left:111px;top:508px;width:87px;height:28px;background:#d9d9d9;"></div>
<div style="left:279px;top:511px;width:87px;height:22px;background:#d9d9d9;"></div>
<div style="left:123px;top:553px;width:63px;height:22px;background:#d9d9d9;"></div>
<svg style="left:0;top:0" width="1884" height="1546" viewBox="8 346 1884 1546"><path d="M244.500 832V841H329.500V853" fill="none" stroke="#a6dcdf" stroke-width="1"/><path d="M247.500 832V845.500H161.500V853" fill="none" stroke="#f3a3a5" stroke-width="1"/><path d="M161.500 884V898" fill="none" stroke="#9a9da0" stroke-width="1"/><rect x="77.500" y="681.500" width="339" height="277" fill="none" stroke="#ff0000" stroke-width="3"/></svg>
</div>
<div style="left:1892px;top:346px;width:28px;height:1546px;background:#e5e5e5;border-left:1px solid #bcbcbc"></div>
<div style="left:1892px;top:346px;width:28px;height:27px;background:linear-gradient(90deg,#fefefe,#eeeeee);border-left:1px solid #c8c8c8;border-bottom:2px solid #c6c6c6"></div>
<div style="left:1892px;top:1864px;width:28px;height:28px;background:linear-gradient(90deg,#fefefe,#eeeeee);border-left:1px solid #c8c8c8;border-top:2px solid #c6c6c6"></div>
<svg style="left:1898.25px;top:355.25px" width="15.5" height="7.5" viewBox="0 0 15.5 7.5"><path d="M0 7.5H15.5L7.75 0Z" fill="#555"/></svg>
<svg style="left:1898.25px;top:1873.75px" width="15.5" height="7.5" viewBox="0 0 15.5 7.5"><path d="M0 0H15.5L7.75 7.5Z" fill="#555"/></svg>
<div style="left:1892px;top:1097px;width:28px;height:678px;background:linear-gradient(90deg,#fefefe,#f2f2f2);border-left:1px solid #bcbcbc;border-top:2px solid #bebebe;border-bottom:2px solid #bebebe;"></div>
<div style="left:8px;top:1892px;width:1884px;height:28px;background:#e4e4e4;border-top:1px solid #c8c8c8"></div>
<div style="left:8px;top:1892px;width:28px;height:28px;background:linear-gradient(#fdfdfd,#ececec);border:1px solid #c8c8c8"></div>
<div style="left:1864px;top:1892px;width:28px;height:28px;background:linear-gradient(#fdfdfd,#ececec);border:1px solid #c8c8c8"></div>
<svg style="left:16.0px;top:1898.25px" width="8" height="15.5" viewBox="0 0 8 15.5"><path d="M8 0V15.5L0 7.75Z" fill="#555"/></svg>
<svg style="left:1874.0px;top:1898.25px" width="8" height="15.5" viewBox="0 0 8 15.5"><path d="M0 0V15.5L8 7.75Z" fill="#555"/></svg>
<div style="left:178px;top:1892px;width:1539px;height:28px;background:linear-gradient(#fdfdfd,#f0f0f0);border:1px solid #c8c8c8"></div>
<div style="left:1892px;top:1892px;width:28px;height:28px;background:#efefef;border-left:1px solid #c8c8c8;border-top:1px solid #c8c8c8"></div>
<div style="left:1926px;top:228px;width:1910px;height:56px;background:#b8b8b8;border-top-right-radius:10px"></div>
<div style="left:1926px;top:228px;width:250px;height:56px;background:#efefef;"></div>
<div style="left:1926px;top:228px;width:250px;height:6px;background:#2f8bd2;"></div>
<div class="u" style="left:1951px;top:244.60px;letter-spacing:0.021px;">Pseudocode</div>
<svg style="left:2130.75px;top:248.75px" width="20.5" height="20.5" viewBox="0 0 20.5 20.5"><path d="M2 2L18.5 18.5M18.5 2L2 18.5" stroke="#111" stroke-width="2.7" fill="none"/></svg>
<svg style="left:3770.0px;top:254.05px" width="14" height="8.5" viewBox="0 0 14 8.5"><path d="M0 0H14L7.0 8.5Z" fill="#222"/></svg>
<svg style="left:3806.75px;top:246.75px" width="20.5" height="20.5" viewBox="0 0 20.5 20.5"><path d="M2 2L18.5 18.5M18.5 2L2 18.5" stroke="#111" stroke-width="2.7" fill="none"/></svg>
<div style="left:1926px;top:284px;width:1910px;height:1636px;background:#efefef;"></div>
<svg style="left:1941.5px;top:298px" width="27" height="30" viewBox="0 0 27 30"><defs><linearGradient id="na3" x1="0" y1="0" x2="0" y2="1"><stop offset="0" stop-color="#94d548"/><stop offset="0.5" stop-color="#62b81c"/><stop offset="1" stop-color="#4aa40e"/></linearGradient></defs><path d="M2.500 15L16 4V9.500H25V20H16V26Z" fill="#000" opacity="0.100" transform="translate(1,2)"/><path d="M1.800 14L16 2.900V8.600H24.600V19.400H16V25.100Z" fill="url(#na3)" stroke="#3b7f0c" stroke-width="1.300" stroke-linejoin="miter"/><path d="M4 14L14.800 5.500V9.800H23.400V18.200H14.800V22.500Z" fill="none" stroke="#b9e68a" stroke-width="1" opacity="0.750"/></svg>
<svg style="left:1984.0px;top:309.0px" width="16" height="8" viewBox="0 0 16 8"><path d="M0 0H16L8.0 8Z" fill="#555"/></svg>
<svg style="left:2017.5px;top:298px" width="27" height="30" viewBox="0 0 27 30"><g transform="translate(26.4,0) scale(-1,1)"><defs><linearGradient id="na4" x1="0" y1="0" x2="0" y2="1"><stop offset="0" stop-color="#94d548"/><stop offset="0.5" stop-color="#62b81c"/><stop offset="1" stop-color="#4aa40e"/></linearGradient></defs><path d="M2.500 15L16 4V9.500H25V20H16V26Z" fill="#000" opacity="0.100" transform="translate(1,2)"/><path d="M1.800 14L16 2.900V8.600H24.600V19.400H16V25.100Z" fill="url(#na4)" stroke="#3b7f0c" stroke-width="1.300" stroke-linejoin="miter"/><path d="M4 14L14.800 5.500V9.800H23.400V18.200H14.800V22.500Z" fill="none" stroke="#b9e68a" stroke-width="1" opacity="0.750"/></g></svg>
<svg style="left:2058.0px;top:309.0px" width="16" height="8" viewBox="0 0 16 8"><path d="M0 0H16L8.0 8Z" fill="#555"/></svg>
<div style="left:1926px;top:342px;width:1360px;height:34px;background:#b9b9b9;border:2px solid #828282;border-right:none"></div>
<div class="u" style="left:1946px;top:346.60px;letter-spacing:-0.573px;">Code</div>
<svg style="left:3232px;top:350px" width="22" height="22" viewBox="0 0 22 22"><rect x="1" y="1" width="20" height="20" rx="4" fill="#bdbdbd" stroke="#8a8886" stroke-width="2"/><rect x="9" y="5" width="8" height="8" rx="2.500" fill="none" stroke="#8a8886" stroke-width="2"/><rect x="5" y="9" width="8" height="8" rx="2.500" fill="#bdbdbd" stroke="#8a8886" stroke-width="2"/></svg>
<svg style="left:3260px;top:350px" width="22" height="22" viewBox="0 0 22 22"><rect x="1" y="1" width="20" height="20" rx="4" fill="#bdbdbd" stroke="#8a8886" stroke-width="2"/><path d="M6 6L16 16M16 6L6 16" stroke="#827f7b" stroke-width="3.600"/></svg>
<div style="left:3284px;top:342px;width:6px;height:34px;background:#828282;"></div>
<div style="left:3286px;top:376px;width:2px;height:1544px;background:#828282;"></div>
<div style="left:3288px;top:342px;width:548px;height:34px;background:#b9b9b9;border:2px solid #828282;border-right:none"></div>
<div class="u" style="left:3308px;top:346.60px;letter-spacing:0.609px;">Decompilation Options</div>
<svg style="left:3782px;top:350px" width="22" height="22" viewBox="0 0 22 22"><rect x="1" y="1" width="20" height="20" rx="4" fill="#bdbdbd" stroke="#8a8886" stroke-width="2"/><rect x="9" y="5" width="8" height="8" rx="2.500" fill="none" stroke="#8a8886" stroke-width="2"/><rect x="5" y="9" width="8" height="8" rx="2.500" fill="#bdbdbd" stroke="#8a8886" stroke-width="2"/></svg>
<svg style="left:3810px;top:350px" width="22" height="22" viewBox="0 0 22 22"><rect x="1" y="1" width="20" height="20" rx="4" fill="#bdbdbd" stroke="#8a8886" stroke-width="2"/><path d="M6 6L16 16M16 6L6 16" stroke="#827f7b" stroke-width="3.600"/></svg>
<div style="left:1928px;top:380px;width:1356px;height:1539px;background:#fff;border-top:1px solid #c4c4c4;border-right:1px solid #c4c4c4;border-bottom:2px solid #b8b8b8"></div>
<div style="left:1928px;top:381px;width:74px;height:1536px;background:#eeeeee;"></div>
<div class="cb" style="left:1935px;top:397.93px;font-size:24.5px;width:60px;text-align:right;color:#444;">1</div>
<div class="c" style="left:2011px;top:396.29px;color:#1a1a1a;"><span class="k">int</span> <span class="f">main</span>(<span class="k">unsigned long</span> a0, <span class="k">unsigned long</span> a1)</div>
<div class="c" style="left:1935px;top:433.90px;font-size:24.5px;width:60px;text-align:right;color:#555;">2</div>
<div class="c" style="left:2011px;top:432.26px;color:#1a1a1a;">{</div>
<div class="c" style="left:1935px;top:469.87px;font-size:24.5px;width:60px;text-align:right;color:#555;">3</div>
<div class="c" style="left:2011px;top:468.23px;color:#1a1a1a;">    <span class="k">unsigned long</span> v0;  <span class="g">// [bp-0x48]</span></div>
<div class="c" style="left:1935px;top:505.84px;font-size:24.5px;width:60px;text-align:right;color:#555;">4</div>
<div class="c" style="left:2011px;top:504.20px;color:#1a1a1a;">    <span class="k">unsigned int</span> v1;  <span class="g">// [bp-0x3c]</span></div>
<div class="c" style="left:1935px;top:541.81px;font-size:24.5px;width:60px;text-align:right;color:#555;">5</div>
<div class="c" style="left:2011px;top:540.17px;color:#1a1a1a;">    <span class="k">char</span> v2;  <span class="g">// [bp-0x2c], Other Possible Types: unsigned int</span></div>
<div class="c" style="left:1935px;top:577.78px;font-size:24.5px;width:60px;text-align:right;color:#555;">6</div>
<div class="c" style="left:2011px;top:576.14px;color:#1a1a1a;">    <span class="k">char</span> v3;  <span class="g">// [bp-0x28]</span></div>
<div class="c" style="left:1935px;top:613.75px;font-size:24.5px;width:60px;text-align:right;color:#555;">7</div>
<div class="c" style="left:2011px;top:612.11px;color:#1a1a1a;">    <span class="k">char</span> v4;  <span class="g">// [bp-0x20]</span></div>
<div class="c" style="left:1935px;top:649.72px;font-size:24.5px;width:60px;text-align:right;color:#555;">8</div>
<div class="c" style="left:2011px;top:648.08px;color:#1a1a1a;">    <span class="k">char</span> v5;  <span class="g">// [bp-0x18]</span></div>
<div class="c" style="left:1935px;top:685.69px;font-size:24.5px;width:60px;text-align:right;color:#555;">9</div>
<div class="c" style="left:2011px;top:684.05px;color:#1a1a1a;">    <span class="k">char</span> v6;  <span class="g">// [bp-0x10]</span></div>
<div class="c" style="left:1935px;top:721.66px;font-size:24.5px;width:60px;text-align:right;color:#555;">10</div>
<div class="c" style="left:1935px;top:757.63px;font-size:24.5px;width:60px;text-align:right;color:#555;">11</div>
<div class="c" style="left:2011px;top:755.99px;color:#1a1a1a;">    v1 = a0;</div>
<div class="c" style="left:1935px;top:793.60px;font-size:24.5px;width:60px;text-align:right;color:#555;">12</div>
<div class="c" style="left:2011px;top:791.96px;color:#1a1a1a;">    v0 = a1;</div>
<div class="c" style="left:1935px;top:829.57px;font-size:24.5px;width:60px;text-align:right;color:#555;">13</div>
<div class="c" style="left:2011px;top:827.93px;color:#1a1a1a;">    v6 = 0;</div>
<div class="c" style="left:1935px;top:865.54px;font-size:24.5px;width:60px;text-align:right;color:#555;">14</div>
<div class="c" style="left:2011px;top:863.90px;color:#1a1a1a;">    v4 = 0;</div>
<div class="c" style="left:1935px;top:901.51px;font-size:24.5px;width:60px;text-align:right;color:#555;">15</div>
<div class="c" style="left:2011px;top:899.87px;color:#1a1a1a;">    <span class="f">puts</span>(<span class="s">"Username: "</span>);</div>
<div class="c" style="left:1935px;top:937.48px;font-size:24.5px;width:60px;text-align:right;color:#555;">16</div>
<div class="c" style="left:2011px;top:935.84px;color:#1a1a1a;">    <span class="f">read</span>(0x0, &amp;v5, 0x8);</div>
<div class="c" style="left:1935px;top:973.45px;font-size:24.5px;width:60px;text-align:right;color:#555;">17</div>
<div class="c" style="left:2011px;top:971.81px;color:#1a1a1a;">    <span class="f">read</span>(0x0, &amp;v2, 0x1);</div>
<div class="c" style="left:1935px;top:1009.42px;font-size:24.5px;width:60px;text-align:right;color:#555;">18</div>
<div class="c" style="left:2011px;top:1007.78px;color:#1a1a1a;">    <span class="f">puts</span>(<span class="s">"Password: "</span>);</div>
<div class="c" style="left:1935px;top:1045.39px;font-size:24.5px;width:60px;text-align:right;color:#555;">19</div>
<div class="c" style="left:2011px;top:1043.75px;color:#1a1a1a;">    <span class="f">read</span>(0x0, &amp;v3, 0x8);</div>
<div class="c" style="left:1935px;top:1081.36px;font-size:24.5px;width:60px;text-align:right;color:#555;">20</div>
<div class="c" style="left:2011px;top:1079.72px;color:#1a1a1a;">    <span class="f">read</span>(0x0, &amp;v2, 0x1);</div>
<div class="c" style="left:1935px;top:1117.33px;font-size:24.5px;width:60px;text-align:right;color:#555;">21</div>
<div class="c" style="left:2011px;top:1115.69px;color:#1a1a1a;">    v2 = <span class="f">authenticate</span>(&amp;v5, &amp;v3);</div>
<div class="c" style="left:1935px;top:1153.30px;font-size:24.5px;width:60px;text-align:right;color:#555;">22</div>
<div class="c" style="left:2011px;top:1151.66px;color:#1a1a1a;">    <span class="k">if</span> (v2 != 0)</div>
<div class="c" style="left:1935px;top:1189.27px;font-size:24.5px;width:60px;text-align:right;color:#555;">23</div>
<div class="c" style="left:2011px;top:1187.63px;color:#1a1a1a;">    {</div>
<div class="c" style="left:1935px;top:1225.24px;font-size:24.5px;width:60px;text-align:right;color:#555;">24</div>
<div class="c" style="left:2011px;top:1223.60px;color:#1a1a1a;">        <span class="k">return</span> <span class="f">accepted</span>();</div>
<div class="c" style="left:1935px;top:1261.21px;font-size:24.5px;width:60px;text-align:right;color:#555;">25</div>
<div class="c" style="left:2011px;top:1259.57px;color:#1a1a1a;">    }</div>
<div class="c" style="left:1935px;top:1297.18px;font-size:24.5px;width:60px;text-align:right;color:#555;">26</div>
<div class="c" style="left:2011px;top:1295.54px;color:#1a1a1a;">    <span class="f">rejected</span>(); <span class="g">/* do not return */</span></div>
<div class="c" style="left:1935px;top:1333.15px;font-size:24.5px;width:60px;text-align:right;color:#555;">27</div>
<div class="c" style="left:2011px;top:1331.51px;color:#1a1a1a;">}</div>
<div class="c" style="left:1935px;top:1369.12px;font-size:24.5px;width:60px;text-align:right;color:#555;">28</div>
<svg style="left:1932.25px;top:402.0px" width="15.5" height="8" viewBox="0 0 15.5 8"><path d="M0 0H15.5L7.75 8Z" fill="#555"/></svg>
<svg style="left:1932.25px;top:1157.0px" width="15.5" height="8" viewBox="0 0 15.5 8"><path d="M0 0H15.5L7.75 8Z" fill="#555"/></svg>
<div style="left:3256px;top:381px;width:28px;height:1536px;background:#e5e5e5;border-left:1px solid #bcbcbc"></div>
<div style="left:3256px;top:381px;width:28px;height:27px;background:linear-gradient(90deg,#fefefe,#eeeeee);border-left:1px solid #c8c8c8;border-bottom:2px solid #c6c6c6"></div>
<div style="left:3256px;top:1889px;width:28px;height:28px;background:linear-gradient(90deg,#fefefe,#eeeeee);border-left:1px solid #c8c8c8;border-top:2px solid #c6c6c6"></div>
<svg style="left:3262.25px;top:390.25px" width="15.5" height="7.5" viewBox="0 0 15.5 7.5"><path d="M0 7.5H15.5L7.75 0Z" fill="#555"/></svg>
<svg style="left:3262.25px;top:1898.75px" width="15.5" height="7.5" viewBox="0 0 15.5 7.5"><path d="M0 0H15.5L7.75 7.5Z" fill="#555"/></svg>
<div style="left:3256px;top:408px;width:28px;height:926px;background:linear-gradient(90deg,#fefefe,#f2f2f2);border-left:1px solid #bcbcbc;border-bottom:2px solid #bebebe;"></div>
<div style="left:3288px;top:376px;width:548px;height:1544px;background:#efefef;"></div>
<div style="left:3306.5px;top:398.5px;width:511px;height:49px;background:#fff;border:2px solid #b6b6b6;border-radius:6px"></div>
<div style="left:3306px;top:460px;width:511px;height:1378px;background:#fff;border:1px solid #c0c0c0"></div>
<svg style="left:3320.5px;top:474.0px" width="15" height="8" viewBox="0 0 15 8"><path d="M0 0H15L7.5 8Z" fill="#555"/></svg>
<div class="u" style="left:3354px;top:465.10px;letter-spacing:0.438px;">Data flows</div>
<div style="left:3394px;top:498px;width:28px;height:28px;background:#fff;border:2px solid #bbb;border-radius:3px"></div>
<div class="u" style="left:3434px;top:499.10px;letter-spacing:-0.022px;">Aggressively remove d…</div>
<svg style="left:3320.5px;top:542.0px" width="15" height="8" viewBox="0 0 15 8"><path d="M0 0H15L7.5 8Z" fill="#555"/></svg>
<div class="u" style="left:3354px;top:533.10px;letter-spacing:-0.062px;">Display</div>
<div style="left:3394px;top:566px;width:28px;height:28px;background:#fff;border:2px solid #bbb;border-radius:3px"></div>
<svg style="left:3394px;top:566px" width="28" height="28" viewBox="0 0 28 28"><path d="M6.200 13.300L12.700 21.600L20.900 5.800" fill="none" stroke="#000" stroke-width="3.600" stroke-linejoin="miter"/></svg>
<div class="u" style="left:3434px;top:567.10px;letter-spacing:-0.138px;">Braces on own lines</div>
<div style="left:3394px;top:600px;width:28px;height:28px;background:#fff;border:2px solid #bbb;border-radius:3px"></div>
<svg style="left:3394px;top:600px" width="28" height="28" viewBox="0 0 28 28"><path d="M6.200 13.300L12.700 21.600L20.900 5.800" fill="none" stroke="#000" stroke-width="3.600" stroke-linejoin="miter"/></svg>
<div class="u" style="left:3434px;top:601.10px;letter-spacing:0.436px;">Comment gotos</div>
<div style="left:3394px;top:634px;width:28px;height:28px;background:#fff;border:2px solid #bbb;border-radius:3px"></div>
<svg style="left:3394px;top:634px" width="28" height="28" viewBox="0 0 28 28"><path d="M6.200 13.300L12.700 21.600L20.900 5.800" fill="none" stroke="#000" stroke-width="3.600" stroke-linejoin="miter"/></svg>
<div class="u" style="left:3434px;top:635.10px;letter-spacing:-0.601px;">Show casts</div>
<div style="left:3394px;top:668px;width:28px;height:28px;background:#fff;border:2px solid #bbb;border-radius:3px"></div>
<svg style="left:3394px;top:668px" width="28" height="28" viewBox="0 0 28 28"><path d="M6.200 13.300L12.700 21.600L20.900 5.800" fill="none" stroke="#000" stroke-width="3.600" stroke-linejoin="miter"/></svg>
<div class="u" style="left:3434px;top:669.10px;letter-spacing:0.021px;">Show externs</div>
<div style="left:3394px;top:702px;width:28px;height:28px;background:#fff;border:2px solid #bbb;border-radius:3px"></div>
<svg style="left:3394px;top:702px" width="28" height="28" viewBox="0 0 28 28"><path d="M6.200 13.300L12.700 21.600L20.900 5.800" fill="none" stroke="#000" stroke-width="3.600" stroke-linejoin="miter"/></svg>
<div class="u" style="left:3434px;top:703.10px;letter-spacing:-0.008px;">Show local types</div>
<div style="left:3394px;top:736px;width:28px;height:28px;background:#fff;border:2px solid #bbb;border-radius:3px"></div>
<svg style="left:3394px;top:736px" width="28" height="28" viewBox="0 0 28 28"><path d="M6.200 13.300L12.700 21.600L20.900 5.800" fill="none" stroke="#000" stroke-width="3.600" stroke-linejoin="miter"/></svg>
<div class="u" style="left:3434px;top:737.10px;letter-spacing:-0.255px;">Use compound assign…</div>
<svg style="left:3320.5px;top:780.0px" width="15" height="8" viewBox="0 0 15 8"><path d="M0 0H15L7.5 8Z" fill="#555"/></svg>
<div class="u" style="left:3354px;top:771.10px;letter-spacing:-0.598px;">Graph</div>
<div style="left:3394px;top:804px;width:28px;height:28px;background:#fff;border:2px solid #bbb;border-radius:3px"></div>
<div class="u" style="left:3434px;top:805.10px;letter-spacing:0.127px;">Display exception edge…</div>
<div style="left:3394px;top:838px;width:28px;height:28px;background:#fff;border:2px solid #bbb;border-radius:3px"></div>
<svg style="left:3394px;top:838px" width="28" height="28" viewBox="0 0 28 28"><path d="M6.200 13.300L12.700 21.600L20.900 5.800" fill="none" stroke="#000" stroke-width="3.600" stroke-linejoin="miter"/></svg>
<div class="u" style="left:3434px;top:839.10px;letter-spacing:0.107px;">Leave the largest loop …</div>
<div style="left:3394px;top:872px;width:28px;height:28px;background:#fff;border:2px solid #bbb;border-radius:3px"></div>
<svg style="left:3394px;top:872px" width="28" height="28" viewBox="0 0 28 28"><path d="M6.200 13.300L12.700 21.600L20.900 5.800" fill="none" stroke="#000" stroke-width="3.600" stroke-linejoin="miter"/></svg>
<div class="u" style="left:3434px;top:873.10px;letter-spacing:0.082px;">Simplify switches by un…</div>
<svg style="left:3320.5px;top:916.0px" width="15" height="8" viewBox="0 0 15 8"><path d="M0 0H15L7.5 8Z" fill="#555"/></svg>
<div class="u" style="left:3354px;top:907.10px;letter-spacing:0.692px;">Structuring</div>
<div style="left:3394px;top:940px;width:28px;height:28px;background:#fff;border:2px solid #bbb;border-radius:3px"></div>
<svg style="left:3394px;top:940px" width="28" height="28" viewBox="0 0 28 28"><path d="M6.200 13.300L12.700 21.600L20.900 5.800" fill="none" stroke="#000" stroke-width="3.600" stroke-linejoin="miter"/></svg>
<div class="u" style="left:3434px;top:941.10px;letter-spacing:0.472px;">Improve structuring alg…</div>
<div class="btn" style="left:3388px;top:972px;width:399px;height:49px"></div>
<div class="u" style="left:3398px;top:983.10px;letter-spacing:-0.004px;">Dream</div>
<svg style="left:3757.5px;top:992.0px" width="15" height="8" viewBox="0 0 15 8"><path d="M0 0H15L7.5 8Z" fill="#555"/></svg>
<svg style="left:3320.5px;top:1034.0px" width="15" height="8" viewBox="0 0 15 8"><path d="M0 0H15L7.5 8Z" fill="#555"/></svg>
<div class="u" style="left:3354px;top:1025.10px;letter-spacing:0.030px;">Optimization Passes</div>
<div style="left:3394px;top:1058px;width:28px;height:28px;background:#fff;border:2px solid #bbb;border-radius:3px"></div>
<svg style="left:3394px;top:1058px" width="28" height="28" viewBox="0 0 28 28"><path d="M6.200 13.300L12.700 21.600L20.900 5.800" fill="none" stroke="#000" stroke-width="3.600" stroke-linejoin="miter"/></svg>
<div class="u" style="left:3434px;top:1059.10px;letter-spacing:0.037px;">Simplify register save a…</div>
<div style="left:3394px;top:1092px;width:28px;height:28px;background:#fff;border:2px solid #bbb;border-radius:3px"></div>
<svg style="left:3394px;top:1092px" width="28" height="28" viewBox="0 0 28 28"><path d="M6.200 13.300L12.700 21.600L20.900 5.800" fill="none" stroke="#000" stroke-width="3.600" stroke-linejoin="miter"/></svg>
<div class="u" style="left:3434px;top:1093.10px;letter-spacing:-0.005px;">Simplify stack canaries</div>
<div style="left:3394px;top:1126px;width:28px;height:28px;background:#fff;border:2px solid #bbb;border-radius:3px"></div>
<svg style="left:3394px;top:1126px" width="28" height="28" viewBox="0 0 28 28"><path d="M6.200 13.300L12.700 21.600L20.900 5.800" fill="none" stroke="#000" stroke-width="3.600" stroke-linejoin="miter"/></svg>
<div class="u" style="left:3434px;top:1127.10px;letter-spacing:0.139px;">Simplify base pointer s…</div>
<div style="left:3394px;top:1160px;width:28px;height:28px;background:#fff;border:2px solid #bbb;border-radius:3px"></div>
<svg style="left:3394px;top:1160px" width="28" height="28" viewBox="0 0 28 28"><path d="M6.200 13.300L12.700 21.600L20.900 5.800" fill="none" stroke="#000" stroke-width="3.600" stroke-linejoin="miter"/></svg>
<div class="u" style="left:3434px;top:1161.10px;letter-spacing:0.553px;">Simplify arithmetic divi…</div>
<div style="left:3394px;top:1194px;width:28px;height:28px;background:#fff;border:2px solid #bbb;border-radius:3px"></div>
<svg style="left:3394px;top:1194px" width="28" height="28" viewBox="0 0 28 28"><path d="M6.200 13.300L12.700 21.600L20.900 5.800" fill="none" stroke="#000" stroke-width="3.600" stroke-linejoin="miter"/></svg>
<div class="u" style="left:3434px;top:1195.10px;letter-spacing:0.359px;">Simplify various arithm…</div>
<div style="left:3394px;top:1228px;width:28px;height:28px;background:#fff;border:2px solid #bbb;border-radius:3px"></div>
<svg style="left:3394px;top:1228px" width="28" height="28" viewBox="0 0 28 28"><path d="M6.200 13.300L12.700 21.600L20.900 5.800" fill="none" stroke="#000" stroke-width="3.600" stroke-linejoin="miter"/></svg>
<div class="u" style="left:3434px;top:1229.10px;letter-spacing:0.487px;">Simplify optimized mo…</div>
<div style="left:3394px;top:1262px;width:28px;height:28px;background:#fff;border:2px solid #bbb;border-radius:3px"></div>
<svg style="left:3394px;top:1262px" width="28" height="28" viewBox="0 0 28 28"><path d="M6.200 13.300L12.700 21.600L20.900 5.800" fill="none" stroke="#000" stroke-width="3.600" stroke-linejoin="miter"/></svg>
<div class="u" style="left:3434px;top:1263.10px;letter-spacing:0.414px;">Simplify constant deref…</div>
<div style="left:3394px;top:1296px;width:28px;height:28px;background:#fff;border:2px solid #bbb;border-radius:3px"></div>
<div class="u" style="left:3434px;top:1297.10px;letter-spacing:0.360px;">Convert lowered switc…</div>
<div style="left:3394px;top:1330px;width:28px;height:28px;background:#fff;border:2px solid #bbb;border-radius:3px"></div>
<svg style="left:3394px;top:1330px" width="28" height="28" viewBox="0 0 28 28"><path d="M6.200 13.300L12.700 21.600L20.900 5.800" fill="none" stroke="#000" stroke-width="3.600" stroke-linejoin="miter"/></svg>
<div class="u" style="left:3434px;top:1331.10px;letter-spacing:0.385px;">Duplicate return blocks…</div>
<div style="left:3394px;top:1364px;width:28px;height:28px;background:#fff;border:2px solid #bbb;border-radius:3px"></div>
<svg style="left:3394px;top:1364px" width="28" height="28" viewBox="0 0 28 28"><path d="M6.200 13.300L12.700 21.600L20.900 5.800" fill="none" stroke="#000" stroke-width="3.600" stroke-linejoin="miter"/></svg>
<div class="u" style="left:3434px;top:1365.10px;letter-spacing:0.031px;">Transform expressions …</div>
<div style="left:3394px;top:1398px;width:28px;height:28px;background:#fff;border:2px solid #bbb;border-radius:3px"></div>
<svg style="left:3394px;top:1398px" width="28" height="28" viewBox="0 0 28 28"><path d="M6.200 13.300L12.700 21.600L20.900 5.800" fill="none" stroke="#000" stroke-width="3.600" stroke-linejoin="miter"/></svg>
<div class="u" style="left:3434px;top:1399.10px;letter-spacing:-0.025px;">Swap operands of expr…</div>
<svg style="left:3320.5px;top:1442.0px" width="15" height="8" viewBox="0 0 15 8"><path d="M0 0H15L7.5 8Z" fill="#555"/></svg>
<div class="u" style="left:3354px;top:1433.10px;letter-spacing:0.435px;">Peephole Optimizations</div>
<div style="left:3394px;top:1466px;width:28px;height:28px;background:#fff;border:2px solid #bbb;border-radius:3px"></div>
<svg style="left:3394px;top:1466px" width="28" height="28" viewBox="0 0 28 28"><path d="M6.200 13.300L12.700 21.600L20.900 5.800" fill="none" stroke="#000" stroke-width="3.600" stroke-linejoin="miter"/></svg>
<div class="u" style="left:3434px;top:1467.10px;letter-spacing:-0.385px;">Coalescing cascading If…</div>
<div style="left:3394px;top:1500px;width:28px;height:28px;background:#fff;border:2px solid #bbb;border-radius:3px"></div>
<svg style="left:3394px;top:1500px" width="28" height="28" viewBox="0 0 28 28"><path d="M6.200 13.300L12.700 21.600L20.900 5.800" fill="none" stroke="#000" stroke-width="3.600" stroke-linejoin="miter"/></svg>
<div class="u" style="left:3434px;top:1501.10px;letter-spacing:0.167px;">Remove empty If bodies</div>
<div style="left:3394px;top:1534px;width:28px;height:28px;background:#fff;border:2px solid #bbb;border-radius:3px"></div>
<svg style="left:3394px;top:1534px" width="28" height="28" viewBox="0 0 28 28"><path d="M6.200 13.300L12.700 21.600L20.900 5.800" fill="none" stroke="#000" stroke-width="3.600" stroke-linejoin="miter"/></svg>
<div class="u" style="left:3434px;top:1535.10px;letter-spacing:-0.373px;">a / N0 + (a * N1) / N0 =&gt;…</div>
<div style="left:3394px;top:1568px;width:28px;height:28px;background:#fff;border:2px solid #bbb;border-radius:3px"></div>
<svg style="left:3394px;top:1568px" width="28" height="28" viewBox="0 0 28 28"><path d="M6.200 13.300L12.700 21.600L20.900 5.800" fill="none" stroke="#000" stroke-width="3.600" stroke-linejoin="miter"/></svg>
<div class="u" style="left:3434px;top:1569.10px;letter-spacing:-0.340px;">(A * N0 / N1) &gt;&gt; N2 =&gt; (…</div>
<div style="left:3394px;top:1602px;width:28px;height:28px;background:#fff;border:2px solid #bbb;border-radius:3px"></div>
<svg style="left:3394px;top:1602px" width="28" height="28" viewBox="0 0 28 28"><path d="M6.200 13.300L12.700 21.600L20.900 5.800" fill="none" stroke="#000" stroke-width="3.600" stroke-linejoin="miter"/></svg>
<div class="u" style="left:3434px;top:1603.10px;letter-spacing:-0.549px;">(a &lt;&lt; N) - a =&gt; (a * (2 ** …</div>
<div style="left:3394px;top:1636px;width:28px;height:28px;background:#fff;border:2px solid #bbb;border-radius:3px"></div>
<svg style="left:3394px;top:1636px" width="28" height="28" viewBox="0 0 28 28"><path d="M6.200 13.300L12.700 21.600L20.900 5.800" fill="none" stroke="#000" stroke-width="3.600" stroke-linejoin="miter"/></svg>
<div class="u" style="left:3434px;top:1637.10px;letter-spacing:-0.597px;">a - a / N =&gt; a * (N - 1) / N</div>
<div style="left:3394px;top:1670px;width:28px;height:28px;background:#fff;border:2px solid #bbb;border-radius:3px"></div>
<svg style="left:3394px;top:1670px" width="28" height="28" viewBox="0 0 28 28"><path d="M6.200 13.300L12.700 21.600L20.900 5.800" fill="none" stroke="#000" stroke-width="3.600" stroke-linejoin="miter"/></svg>
<div class="u" style="left:3434px;top:1671.10px;letter-spacing:-0.700px;">a - (a / N) * N =&gt; a % N</div>
<div style="left:3394px;top:1704px;width:28px;height:28px;background:#fff;border:2px solid #bbb;border-radius:3px"></div>
<svg style="left:3394px;top:1704px" width="28" height="28" viewBox="0 0 28 28"><path d="M6.200 13.300L12.700 21.600L20.900 5.800" fill="none" stroke="#000" stroke-width="3.600" stroke-linejoin="miter"/></svg>
<div class="u" style="left:3434px;top:1705.10px;letter-spacing:0.026px;">Simplifying CmpF on A…</div>
<div style="left:3394px;top:1738px;width:28px;height:28px;background:#fff;border:2px solid #bbb;border-radius:3px"></div>
<svg style="left:3394px;top:1738px" width="28" height="28" viewBox="0 0 28 28"><path d="M6.200 13.300L12.700 21.600L20.900 5.800" fill="none" stroke="#000" stroke-width="3.600" stroke-linejoin="miter"/></svg>
<div class="u" style="left:3434px;top:1739.10px;letter-spacing:0.231px;">Simplifying bswap_16()</div>
<div style="left:3394px;top:1772px;width:28px;height:28px;background:#fff;border:2px solid #bbb;border-radius:3px"></div>
<svg style="left:3394px;top:1772px" width="28" height="28" viewBox="0 0 28 28"><path d="M6.200 13.300L12.700 21.600L20.900 5.800" fill="none" stroke="#000" stroke-width="3.600" stroke-linejoin="miter"/></svg>
<div class="u" style="left:3434px;top:1773.10px;letter-spacing:0.266px;">Dereference constant r…</div>
<div style="left:3394px;top:1806px;width:28px;height:28px;background:#fff;border:2px solid #bbb;border-radius:3px"></div>
<svg style="left:3394px;top:1806px" width="28" height="28" viewBox="0 0 28 28"><path d="M6.200 13.300L12.700 21.600L20.900 5.800" fill="none" stroke="#000" stroke-width="3.600" stroke-linejoin="miter"/></svg>
<div class="u" style="left:3434px;top:1807.10px;letter-spacing:-0.597px;">Conv(64-&gt;32, (N * a) &gt;&gt; …</div>
<div style="left:3789px;top:461px;width:27px;height:1376px;background:#e5e5e5;border-left:1px solid #bcbcbc"></div>
<div style="left:3789px;top:461px;width:27px;height:27px;background:linear-gradient(90deg,#fefefe,#eeeeee);border-left:1px solid #c8c8c8;border-bottom:2px solid #c6c6c6"></div>
<div style="left:3789px;top:1809px;width:27px;height:28px;background:linear-gradient(90deg,#fefefe,#eeeeee);border-left:1px solid #c8c8c8;border-top:2px solid #c6c6c6"></div>
<svg style="left:3794.75px;top:470.25px" width="15.5" height="7.5" viewBox="0 0 15.5 7.5"><path d="M0 7.5H15.5L7.75 0Z" fill="#555"/></svg>
<svg style="left:3794.75px;top:1818.75px" width="15.5" height="7.5" viewBox="0 0 15.5 7.5"><path d="M0 0H15.5L7.75 7.5Z" fill="#555"/></svg>
<div style="left:3789px;top:489px;width:27px;height:824px;background:linear-gradient(90deg,#fefefe,#f2f2f2);border-left:1px solid #bcbcbc;border-bottom:2px solid #bebebe;"></div>
<div class="btn" style="left:3307px;top:1853px;width:510px;height:48px"></div>
<div class="u" style="left:3522px;top:1862.60px;letter-spacing:1.238px;">Apply</div>
<div style="left:8px;top:1926px;width:3828px;height:56px;background:#b8b8b8;border-top-right-radius:10px"></div>
<div style="left:8px;top:1926px;width:165px;height:56px;background:#c5c5c5;"></div>
<div style="left:8px;top:1926px;width:165px;height:6px;background:#d9d9d9;"></div>
<div style="left:173px;top:1926px;width:147px;height:56px;background:#efefef;"></div>
<div style="left:173px;top:1926px;width:147px;height:6px;background:#2f8bd2;"></div>
<div class="u" style="left:34px;top:1942.60px;letter-spacing:-0.013px;">Console</div>
<div class="u" style="left:206px;top:1942.60px;letter-spacing:-0.031px;">Log</div>
<svg style="left:274.75px;top:1946.75px" width="20.5" height="20.5" viewBox="0 0 20.5 20.5"><path d="M2 2L18.5 18.5M18.5 2L2 18.5" stroke="#111" stroke-width="2.7" fill="none"/></svg>
<svg style="left:3770.0px;top:1952.05px" width="14" height="8.5" viewBox="0 0 14 8.5"><path d="M0 0H14L7.0 8.5Z" fill="#222"/></svg>
<svg style="left:3806.75px;top:1945.25px" width="20.5" height="20.5" viewBox="0 0 20.5 20.5"><path d="M2 2L18.5 18.5M18.5 2L2 18.5" stroke="#111" stroke-width="2.7" fill="none"/></svg>
<div style="left:8px;top:1982px;width:3828px;height:316px;background:#fff;"></div>
<div style="left:8px;top:1982px;width:3800px;height:40px;background:linear-gradient(#fbfbfb,#ececec);"></div>
<div style="left:8px;top:2021px;width:3800px;height:2px;background:#b4b4b4;"></div>
<div style="left:119px;top:1982px;width:2px;height:39px;background:#d2d2d2;"></div>
<div style="left:419px;top:1982px;width:2px;height:39px;background:#d2d2d2;"></div>
<div style="left:619px;top:1982px;width:2px;height:39px;background:#d2d2d2;"></div>
<div class="u" style="left:196px;top:1988.60px;letter-spacing:0.594px;">Timestamp</div>
<div class="u" style="left:474px;top:1988.60px;letter-spacing:-0.013px;">Source</div>
<div class="u" style="left:2159px;top:1988.60px;letter-spacing:0.987px;">Content</div>
<div style="left:8px;top:2023px;width:3800px;height:275px;overflow:hidden">
<div class="u" style="left:121px;top:-15.90px;letter-spacing:-0.047px;">12:19:39 AM</div>
<div class="u" style="left:420px;top:-15.90px;letter-spacing:0.135px;">angrmanag…</div>
<div class="u" style="left:619px;top:-15.90px;letter-spacing:0.548px;">Job "Function prototype finding" completed after 0.00 seconds</div>
<div class="u" style="left:121px;top:26.10px;letter-spacing:-0.047px;">12:19:39 AM</div>
<div class="u" style="left:420px;top:26.10px;letter-spacing:0.135px;">angrmanag…</div>
<div class="u" style="left:619px;top:26.10px;letter-spacing:0.402px;">Job "Variable Recovery" started</div>
<div class="u" style="left:121px;top:68.10px;letter-spacing:-0.047px;">12:19:39 AM</div>
<div class="u" style="left:420px;top:68.10px;letter-spacing:0.135px;">angrmanag…</div>
<div class="u" style="left:619px;top:68.10px;letter-spacing:0.259px;">Job "Variable Recovery" completed after 0.10 seconds</div>
<div class="u" style="left:121px;top:110.10px;letter-spacing:-0.047px;">12:19:41 AM</div>
<div class="u" style="left:420px;top:110.10px;letter-spacing:0.135px;">angrmanag…</div>
<div class="u" style="left:619px;top:110.10px;letter-spacing:0.402px;">Job "Variable Recovery" started</div>
<div class="u" style="left:121px;top:152.10px;letter-spacing:-0.047px;">12:19:41 AM</div>
<div class="u" style="left:420px;top:152.10px;letter-spacing:0.135px;">angrmanag…</div>
<div class="u" style="left:619px;top:152.10px;letter-spacing:0.259px;">Job "Variable Recovery" completed after 0.03 seconds</div>
<div class="u" style="left:121px;top:194.10px;letter-spacing:-0.047px;">12:19:41 AM</div>
<div class="u" style="left:420px;top:194.10px;letter-spacing:0.135px;">angrmanag…</div>
<div class="u" style="left:619px;top:194.10px;letter-spacing:0.661px;">Job "Decompiling" started</div>
<div class="u" style="left:121px;top:236.10px;letter-spacing:-0.047px;">12:19:42 AM</div>
<div class="u" style="left:420px;top:236.10px;letter-spacing:0.135px;">angrmanag…</div>
<div class="u" style="left:619px;top:236.10px;letter-spacing:0.400px;">Job "Decompiling" completed after 0.55 seconds</div>
</div>
<div style="left:3808px;top:1982px;width:28px;height:316px;background:#e5e5e5;border-left:1px solid #bcbcbc"></div>
<div style="left:3808px;top:1982px;width:28px;height:27px;background:linear-gradient(90deg,#fefefe,#eeeeee);border-left:1px solid #c8c8c8;border-bottom:2px solid #c6c6c6"></div>
<div style="left:3808px;top:2270px;width:28px;height:28px;background:linear-gradient(90deg,#fefefe,#eeeeee);border-left:1px solid #c8c8c8;border-top:2px solid #c6c6c6"></div>
<svg style="left:3814.25px;top:1991.25px" width="15.5" height="7.5" viewBox="0 0 15.5 7.5"><path d="M0 7.5H15.5L7.75 0Z" fill="#555"/></svg>
<svg style="left:3814.25px;top:2279.75px" width="15.5" height="7.5" viewBox="0 0 15.5 7.5"><path d="M0 0H15.5L7.75 7.5Z" fill="#555"/></svg>
<div style="left:3808px;top:2148px;width:28px;height:122px;background:linear-gradient(90deg,#fefefe,#f2f2f2);border-left:1px solid #bcbcbc;border-top:2px solid #bebebe;"></div>
</div></body></html>
